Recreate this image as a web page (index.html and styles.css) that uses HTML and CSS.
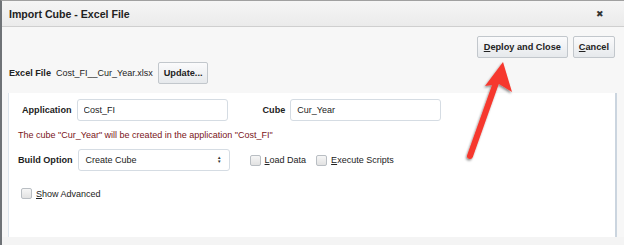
FILE: index.html
```html
<!DOCTYPE html>
<html lang="en">
<head>
  <meta charset="UTF-8" />
  <title>Import Cube - Excel File</title>
  <link rel="stylesheet" href="styles.css">
</head>
<body>
  <div class="dialog">
    <div class="titlebar">
      <span class="title">Import Cube - Excel File</span>
      <span class="close">&#10006;</span>
    </div>
    <div class="content">
      <div class="actions">
        <button class="btn deploy"><u>D</u>eploy and Close</button>
        <button class="btn"><u>C</u>ancel</button>
      </div>
      <div class="file-row">
        <span class="label">Excel File</span>
        <span class="filename">Cost_FI__Cur_Year.xlsx</span>
        <button class="btn">Update...</button>
      </div>
      <div class="panel">
        <div class="row">
          <span class="label app-label">Application</span>
          <input class="field" type="text" value="Cost_FI">
          <span class="label cube-label">Cube</span>
          <input class="field" type="text" value="Cur_Year">
        </div>
        <div class="message">The cube "Cur_Year" will be created in the application "Cost_FI"</div>
        <div class="row">
          <span class="label">Build Option</span>
          <div class="select">Create Cube<span class="spin">&#9650;<br>&#9660;</span></div>
          <label class="check load"><span class="box"></span><span><u>L</u>oad Data</span></label>
          <label class="check"><span class="box"></span><span><u>E</u>xecute Scripts</span></label>
        </div>
        <label class="check advanced"><span class="box"></span><span><u>S</u>how Advanced</span></label>
      </div>
    </div>
    <svg class="arrow" width="624" height="245" viewBox="0 0 624 245">
      <defs>
        <filter id="sh" x="-20%" y="-20%" width="140%" height="140%">
          <feDropShadow dx="-1" dy="1.5" stdDeviation="1.2" flood-color="#000" flood-opacity="0.45"/>
        </filter>
      </defs>
      <g filter="url(#sh)" fill="#f6392f">
        <line x1="470" y1="156" x2="497" y2="80" stroke="#f6392f" stroke-width="6" stroke-linecap="round"/>
        <polygon points="503,62 512,92 499,84 485,86"/>
      </g>
    </svg>
  </div>
</body>
</html>
```

FILE: styles.css
```css
body {
  margin: 0;
  font-family: 'Liberation Sans', Arial, sans-serif;
  font-size: 9px;
  color: #222;
  background: #f4f4f4;
}

.dialog {
  position: relative;
  width: 624px;
  height: 245px;
  border-left: 2px solid #6f7377;
  border-top: 1px solid #a0a0a0;
  box-sizing: border-box;
  overflow: hidden;
}

.titlebar {
  height: 25px;
  display: flex;
  align-items: center;
  justify-content: space-between;
  padding: 0 20px 0 7px;
  background: linear-gradient(#f5f5f5, #ebebeb);
  border-bottom: 1px solid #cfcfcf;
}

.title {
  font-weight: bold;
  font-size: 10.6px;
  color: #222;
}

.close {
  font-size: 9px;
  color: #333;
  margin-top: 1px;
}

.content {
  background: #f7f7f7;
  padding: 9px 0 0 0;
}

.actions {
  display: flex;
  justify-content: flex-end;
  gap: 5px;
  padding-right: 9px;
}

.btn {
  font-family: inherit;
  font-size: 9.2px;
  font-weight: bold;
  color: #222;
  height: 22px;
  padding: 0 5px;
  background: linear-gradient(#fbfbfc, #e6e9ec);
  border: 1px solid #c2c7cc;
  border-radius: 2px;
}

.deploy {
  padding: 0 6px;
}

.file-row {
  display: flex;
  align-items: center;
  gap: 5px;
  padding: 4px 0 0 7px;
}

.label {
  font-weight: bold;
  font-size: 9.1px;
}

.filename {
  margin-right: 0;
}

.panel {
  margin: 9px 7px 0 6px;
  height: 144px;
  background: #fff;
  border-left: 1px solid #dde5ec;
  border-right: 2px solid #cbd5df;
  padding: 6px 0 0 9px;
  box-sizing: border-box;
}

.row {
  display: flex;
  align-items: center;
  gap: 5px;
}

.app-label {
  margin-left: 4px;
}

.cube-label {
  margin-left: 30px;
}

.field {
  width: 151px;
  height: 22px;
  box-sizing: border-box;
  border: 1px solid #d5dce3;
  border-radius: 3px;
  padding: 0 6px;
  font-family: inherit;
  font-size: 9px;
  color: #222;
}

.message {
  color: #7a1419;
  margin: 9px 0 9px 0;
}

.select {
  width: 152px;
  height: 22px;
  box-sizing: border-box;
  border: 1px solid #d5dce3;
  border-radius: 3px;
  padding: 0 7px;
  display: flex;
  align-items: center;
  justify-content: space-between;
}

.spin {
  font-size: 4.5px;
  line-height: 4.5px;
  text-align: center;
  color: #333;
}

.check {
  display: flex;
  align-items: center;
  gap: 4px;
  margin-left: 5px;
}

.load {
  margin-left: 15px;
}

.box {
  width: 9px;
  height: 9px;
  border: 1px solid #b9bec3;
  border-radius: 2px;
  background: linear-gradient(#f6f6f6, #e2e2e2);
}

.advanced {
  margin: 17px 0 0 3px;
}

.arrow {
  position: absolute;
  left: -2px;
  top: -1px;
  pointer-events: none;
}
```
